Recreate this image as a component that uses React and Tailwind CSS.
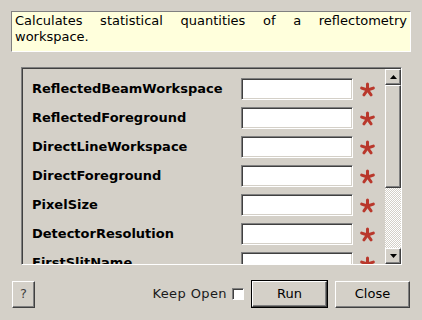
import React from 'react'

const fields = [
    'ReflectedBeamWorkspace',
    'ReflectedForeground',
    'DirectLineWorkspace',
    'DirectForeground',
    'PixelSize',
    'DetectorResolution',
    'FirstSlitName'
]

function Asterisk() {
    const arms = [0, 72, 144, 216, 288]
    return (
        <svg width="15" height="15" viewBox="0 0 16 16">
            {arms.map((a) => (
                <line
                    key={a}
                    x1="8"
                    y1="8.5"
                    x2="8"
                    y2="2"
                    stroke="#b9382c"
                    strokeWidth="3.2"
                    strokeLinecap="round"
                    transform={`rotate(${a} 8 8.5)`}
                />
            ))}
        </svg>
    )
}

function Arrow({ down }) {
    return (
        <svg width="7" height="4" viewBox="0 0 7 4">
            <polygon points={down ? '0,0 7,0 3.5,4' : '0,4 7,4 3.5,0'} fill="#000" />
        </svg>
    )
}

const raised = 'border border-t-white border-l-white border-b-[#404040] border-r-[#404040] shadow-[inset_-1px_-1px_0_#808080]'

export default function App() {
    return (
        <div className="w-[422px] h-[320px] bg-[#d4d0c8] overflow-hidden font-['DejaVu_Sans',sans-serif] text-[13px] text-black">
            <div className="pt-[11px] pl-[11px]">
                <div className="w-[400px] h-[41px] bg-[#ffffdc] border border-t-[#808080] border-l-[#808080] border-b-white border-r-white px-[3px] pt-[1px] text-justify leading-[16px]">
                    Calculates statistical quantities of a reflectometry workspace.
                </div>
            </div>

            <div className="ml-[21px] mt-[15px] w-[381px] h-[198px] flex border border-t-[#808080] border-l-[#808080] border-b-white border-r-white shadow-[inset_1px_1px_0_#404040]">
                <div className="flex-1 overflow-hidden pt-[10px] pl-[9px] ml-[1px]">
                    <div className="flex flex-col gap-[7px]">
                        {fields.map((f) => (
                            <div key={f} className="flex items-center h-[22px]">
                                <div className="w-[209px] font-bold">{f}</div>
                                <div className="w-[112px] h-[22px] bg-white border border-t-[#808080] border-l-[#808080] border-b-white border-r-white shadow-[inset_1px_1px_0_#404040,inset_-1px_-1px_0_#d4d0c8]"></div>
                                <div className="ml-[7px] flex items-center">
                                    <Asterisk />
                                </div>
                            </div>
                        ))}
                    </div>
                </div>
                <div className="w-[16px] flex flex-col mt-[1px]">
                    <div className={`h-[16px] flex items-center justify-center bg-[#d4d0c8] ${raised}`}>
                        <Arrow />
                    </div>
                    <div className={`h-[103px] bg-[#d4d0c8] ${raised}`}></div>
                    <div className="flex-1 bg-[image:repeating-conic-gradient(#ffffff_0%_25%,#d4d0c8_0%_50%)] bg-[length:2px_2px]"></div>
                    <div className={`h-[16px] flex items-center justify-center bg-[#d4d0c8] ${raised}`}>
                        <Arrow down />
                    </div>
                </div>
            </div>

            <div className="flex items-center mt-[15px] px-[12px]">
                <button className={`w-[23px] h-[27px] bg-[#d4d0c8] text-[#404040] ${raised}`}>?</button>
                <div className="flex-1"></div>
                <span className="text-[#1a1a1a] tracking-[0.4px]">Keep Open</span>
                <div className="ml-[5px] w-[12px] h-[12px] bg-white border border-t-[#808080] border-l-[#808080] border-b-white border-r-white shadow-[inset_1px_1px_0_#404040]"></div>
                <div className="ml-[7px] w-[77px] h-[28px] border border-black">
                    <button className={`w-full h-full bg-[#d4d0c8] ${raised}`}>Run</button>
                </div>
                <button className={`ml-[7px] w-[75px] h-[27px] bg-[#d4d0c8] ${raised}`}>Close</button>
            </div>
        </div>
    )
}
